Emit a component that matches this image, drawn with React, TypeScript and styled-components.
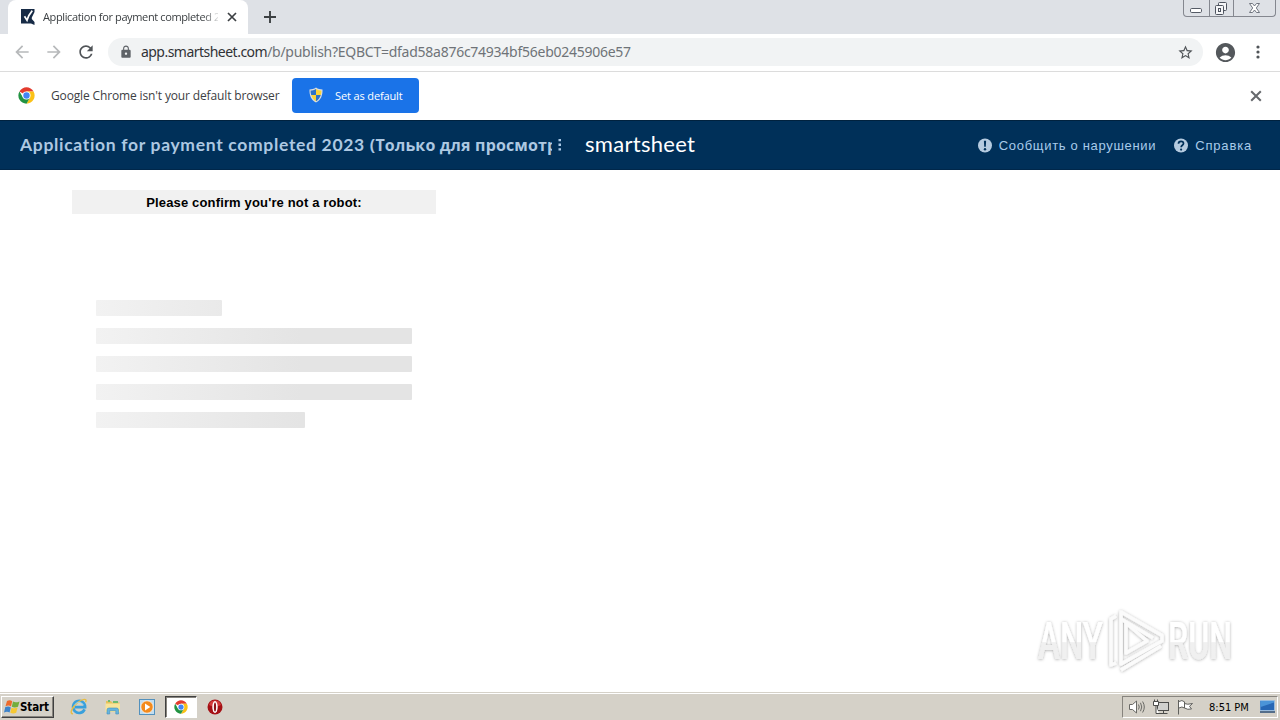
import styled, { createGlobalStyle } from "styled-components";
import { MdLock, MdStarBorder, MdAccountCircle, MdRefresh, MdArrowBack, MdArrowForward } from "react-icons/md";

const GlobalStyle = createGlobalStyle`
  * {
    box-sizing: border-box;
  }

  body {
    margin: 0;
    overflow: hidden;
    background: #fff;
    font-family: "Open Sans", "Noto Sans", sans-serif;
  }

  svg {
    display: block;
    flex-shrink: 0;
  }
`;

const Screen = styled.div`
  display: flex;
  flex-direction: column;
  width: 1280px;
  height: 720px;
  overflow: hidden;
`;

/* letter-spacing varies with each label */
const Label = styled.span<{ $size: number; $color?: string; $spacing?: number; $bold?: boolean }>`
  font-size: ${(p) => p.$size}px;
  color: ${(p) => p.$color ?? "#3c4043"};
  letter-spacing: ${(p) => p.$spacing ?? 0}px;
  font-weight: ${(p) => (p.$bold ? 700 : 400)};
  white-space: pre;
`;

const TabStrip = styled.div`
  display: flex;
  height: 34px;
  padding-left: 8px;
  background: #dee1e6;
`;

const Tab = styled.div`
  display: flex;
  align-items: center;
  width: 240px;
  height: 34px;
  padding-left: 13px;
  background: #fff;
  border-radius: 8px 8px 0 0;
`;

const TabTitle = styled.div`
  display: flex;
  width: 175px;
  margin: 0 9px 0 8px;
  padding-bottom: 1px;
  overflow: hidden;
  mask-image: linear-gradient(to right, #000 160px, transparent 178px);
`;

const NewTab = styled.div`
  padding: 11px 0 0 16px;
`;

const WindowControls = styled.div`
  display: flex;
  width: 93px;
  height: 17px;
  margin: 0 4px 0 auto;
  border: 1px solid #84878f;
  border-top: 0;
  border-radius: 0 0 4px 4px;
`;

const WindowButton = styled.div<{ $width: number }>`
  display: flex;
  justify-content: center;
  width: ${(p) => p.$width}px;
  border-left: 1px solid #84878f;

  &:first-child {
    border-left: 0;
  }
`;

const Toolbar = styled.div`
  display: flex;
  align-items: center;
  height: 38px;
  padding: 0 11px 1px 12px;
  border-bottom: 1px solid #dcdcdc;
`;

const NavButtons = styled.div`
  display: flex;
  gap: 12px;
  width: 96px;
`;

const AddressBar = styled.div`
  display: flex;
  align-items: center;
  width: 1096px;
  height: 28px;
  padding: 0 9px 0 11px;
  background: #f1f3f4;
  border-radius: 14px;
`;

const Url = styled.div`
  display: flex;
  flex: 1;
  margin-left: 8px;
  padding-bottom: 1px;
  font-family: "Noto Sans", sans-serif;
`;

const ToolbarActions = styled.div`
  display: flex;
  align-items: center;
  gap: 10px;
  margin-left: 11px;
`;

const InfoBar = styled.div`
  display: flex;
  align-items: center;
  height: 48px;
  padding: 0 18px 1px;
`;

const InfoText = styled.div`
  display: flex;
  width: 241px;
  margin-left: 16px;
  padding-bottom: 1px;
`;

const DefaultButton = styled.div`
  display: flex;
  align-items: center;
  width: 127px;
  height: 35px;
  margin-right: auto;
  padding: 0 0 1px 16px;
  gap: 11px;
  background: #1a73e8;
  border-radius: 4px;
`;

const SheetHeader = styled.header`
  display: flex;
  align-items: center;
  height: 50px;
  padding: 0 28px 0 20px;
  background: #003059;
  border-top: 1px solid #00223f;
  border-bottom: 1px solid #00274a;
`;

const SheetTitle = styled.div`
  display: flex;
  align-items: baseline;
  width: 532px;
  overflow: hidden;
`;

const SheetName = styled.div`
  font-family: Lato, sans-serif;
`;

const BrandName = styled.div`
  margin: -3px auto 0 21px;
  color: #fff;
  font-family: Lato, sans-serif;
  font-size: 22px;
  line-height: 26px;
  letter-spacing: 0.3px;
`;

const HeaderLink = styled.div`
  display: flex;
  align-items: center;
  gap: 6px;
  margin-left: 18px;
  font-family: "Liberation Sans", Arial, sans-serif;
`;

const Content = styled.main`
  flex: 1;
  padding: 20px 72px;
`;

const RobotCard = styled.section`
  width: 364px;
`;

const RobotTitle = styled.div`
  display: flex;
  align-items: center;
  justify-content: center;
  height: 24px;
  background: #f1f1f1;
  font-family: "Liberation Sans", Arial, sans-serif;
`;

const Skeleton = styled.div`
  display: flex;
  flex-direction: column;
  gap: 12px;
  padding: 86px 24px 0;
`;

const SkeletonLine = styled.div<{ $width: number }>`
  width: ${(p) => p.$width}px;
  height: 16px;
  border-radius: 1px;
  background: linear-gradient(to right, #f2f2f2, #e4e4e4 205px);
`;

const Watermark = styled.div`
  position: absolute;
  left: 1030px;
  top: 603px;
`;

const Taskbar = styled.footer`
  display: flex;
  align-items: center;
  height: 28px;
  background: #d5d1c8;
  border-top: 1px solid #d5d1c8;
  box-shadow: inset 0 1px 0 #fff;
`;

const StartButton = styled.div`
  display: flex;
  align-items: center;
  width: 53px;
  height: 22px;
  margin-left: 1px;
  padding-left: 2px;
  border: 1px solid;
  border-color: #fff #404040 #404040 #fff;
  box-shadow: inset -1px -1px 0 #87847e;
  font-family: "DejaVu Sans Condensed", "DejaVu Sans", sans-serif;
`;

const QuickLaunch = styled.div`
  display: flex;
  align-items: center;
  margin-left: 8px;
`;

const LaunchItem = styled.div<{ $active?: boolean }>`
  display: flex;
  align-items: center;
  justify-content: center;
  width: ${(p) => (p.$active ? 32 : 34)}px;
  height: 22px;
  margin: 0 ${(p) => (p.$active ? 1 : 0)}px;
  border: ${(p) => (p.$active ? "1px solid" : "0")};
  border-color: #404040 #fff #fff #404040;
  background: ${(p) => (p.$active ? "#fff" : "transparent")};
  box-shadow: ${(p) => (p.$active ? "inset 1px 1px 0 #87847e" : "none")};
`;

const Tray = styled.div`
  display: flex;
  align-items: center;
  width: 156px;
  height: 22px;
  margin: 0 2px 0 auto;
  padding-left: 5px;
  border: 1px solid;
  border-color: #87847e #fff #fff #87847e;
  font-family: "DejaVu Sans Condensed", "DejaVu Sans", sans-serif;
`;

const TrayIcons = styled.div`
  display: flex;
  gap: 7px;
  width: 81px;
`;

const Clock = styled.div`
  width: 51px;
  line-height: 14px;
`;

function CheckFavicon() {
  return (
    <svg width="14" height="16" viewBox="0 0 14 16">
      <path d="M0 0H13.5V3L10.8 8.5V10L13.5 13V16L10 14.6H0Z" fill="#172b46" />
      <path d="M3.5 7.2 6 11.2C7 8 8.5 4.8 11.3 1.6" fill="none" stroke="#fff" strokeWidth="1.7" />
    </svg>
  );
}

function Cross({ size, color, width = 1.7 }: { size: number; color: string; width?: number }) {
  return (
    <svg width={size} height={size} viewBox="0 0 10 10">
      <path d="M1 1 9 9M9 1 1 9" stroke={color} strokeWidth={width} />
    </svg>
  );
}

function ChromeLogo({ size }: { size: number }) {
  return (
    <svg width={size} height={size} viewBox="0 0 48 48">
      <circle cx="24" cy="24" r="23" fill="#fff" />
      <path d="M24 24 4.1 12.5A23 23 0 0 1 43.9 12.5H24Z" fill="#e33b2e" />
      <path d="M24 12.5H43.9A23 23 0 0 1 24 47L34 29.8Z" fill="#fbc116" />
      <path d="M4.1 12.5A23 23 0 0 0 24 47L34 29.8 14 29.8Z" fill="#229342" />
      <circle cx="24" cy="24" r="11.5" fill="#fff" />
      <circle cx="24" cy="24" r="9" fill="#4285f4" />
    </svg>
  );
}

function Shield() {
  return (
    <svg width="16" height="16" viewBox="0 0 16 16">
      <path d="M8 .5C10 2 12.3 2.4 14.5 2.5C14.8 8 13 13 8 15.5C3 13 1.2 8 1.5 2.5C3.7 2.4 6 2 8 .5Z" fill="#d9dde0" />
      <path d="M8 2C6 3.2 4.3 3.5 2.6 3.6C2.5 5.2 2.7 6.8 3.2 8.1H8Z" fill="#2c72c7" />
      <path d="M8 2C10 3.2 11.7 3.5 13.4 3.6C13.5 5.2 13.3 6.8 12.8 8.1H8Z" fill="#fbd335" />
      <path d="M8 8.1H3.2C4 10.7 5.4 12.8 8 14.3Z" fill="#fbd335" />
      <path d="M8 8.1H12.8C12 10.7 10.6 12.8 8 14.3Z" fill="#2c72c7" />
    </svg>
  );
}

function NoticeIcon() {
  return (
    <svg width="15" height="15" viewBox="0 0 15 15">
      <circle cx="7" cy="7.5" r="7" fill="#b5cbe0" />
      <path d="M5.9 2.8H8.1L7.8 8.7H6.2Z" fill="#003059" />
      <circle cx="7" cy="11.2" r="1.2" fill="#003059" />
    </svg>
  );
}

function HelpIcon() {
  return (
    <svg width="15" height="15" viewBox="0 0 15 15">
      <circle cx="7" cy="7.5" r="7" fill="#b5cbe0" />
      <path d="M4.5 5.8C4.5 2.5 9.5 2.8 9.5 5.5C9.5 7.3 7.1 7.2 7.1 9.2" fill="none" stroke="#003059" strokeWidth="1.7" />
      <circle cx="7.1" cy="11.6" r="1.1" fill="#003059" />
    </svg>
  );
}

function MinimizeGlyph() {
  return (
    <svg width="13" height="15" viewBox="0 0 13 15">
      <rect x=".5" y="8.5" width="11" height="4" rx="1.2" fill="#fff" stroke="#555b66" />
    </svg>
  );
}

function RestoreGlyph() {
  return (
    <svg width="16" height="16" viewBox="0 0 16 16" fill="#f5f6f8" stroke="#4e545f">
      <rect x="4.5" y="2.5" width="8" height="8" rx="1" />
      <rect x="1.5" y="5.5" width="8" height="9" rx="1" />
      <rect x="4.5" y="8.5" width="2" height="3" />
    </svg>
  );
}

function CloseGlyph() {
  return (
    <svg width="13" height="15" viewBox="0 0 13 15">
      <path
        d="M1.5 3.5H4.5L6.5 6 8.5 3.5H11.5L8.3 8 11.5 12.5H8.5L6.5 10 4.5 12.5H1.5L4.7 8Z"
        fill="#fff"
        stroke="#626873"
        strokeWidth=".9"
      />
    </svg>
  );
}

function WindowsLogo() {
  return (
    <svg width="16" height="16" viewBox="0 0 16 16">
      <path d="M3 2Q6 .3 8.2 2.2L7 7.4Q4.8 5.8 1.5 7.2Z" fill="#ee6a2b" />
      <path d="M9 2.5Q11.5 4.2 15.5 2.4L14 7.7Q10.8 9.2 7.8 7.7Z" fill="#73ad3c" />
      <path d="M1.3 8.1Q4.6 6.8 6.8 8.4L5.6 13.5Q3.3 12 0 13.4Z" fill="#3e83ca" />
      <path d="M7.5 8.7Q10.4 10 13.6 8.6L12.2 13.7Q9.3 15.3 6.3 13.7Z" fill="#f6c833" />
    </svg>
  );
}

function ExplorerIcon() {
  return (
    <svg width="18" height="18" viewBox="0 0 18 18">
      <path d="M14.6 11.4A6 6 0 1 1 15.1 9.2H5" fill="none" stroke="#39a0dc" strokeWidth="2.7" />
      <path d="M3 15.8C-1 16 2 9 8 4.2C12 1 17.8-.2 15.6 4.2" fill="none" stroke="#e8bd45" strokeWidth="1.4" />
      <path d="M4.5 7.2A5 5 0 0 1 13.5 7" fill="none" stroke="#96d5f3" strokeWidth=".9" />
    </svg>
  );
}

function FolderIcon() {
  return (
    <svg width="18" height="18" viewBox="0 0 18 18">
      <path d="M2 3H7L8.2 4.5H15.5V14H2Z" fill="#e5c25c" />
      <path d="M4 2H6V4H4ZM9 3H14V5H9Z" fill="#6fba70" />
      <path d="M1.5 5.5H16V14H1.5Z" fill="#f8e49a" />
      <path d="M3 16V12Q3 10 5 10H12.5Q14.5 10 14.5 12V16H11.8V12.7H5.7V16Z" fill="#66b4df" stroke="#4290bd" strokeWidth=".6" />
    </svg>
  );
}

function PlayerIcon() {
  return (
    <svg width="16" height="16" viewBox="0 0 16 16">
      <rect x=".5" y=".5" width="15" height="15" fill="#c1ddf0" stroke="#5391bd" />
      <circle cx="8" cy="8" r="6.2" fill="#f38a1c" stroke="#fff" strokeWidth=".7" />
      <path d="M6 4.5 11.3 8 6 11.5Z" fill="#fff" />
    </svg>
  );
}

function OperaIcon() {
  return (
    <svg width="16" height="16" viewBox="0 0 16 16">
      <circle cx="8" cy="8" r="7.5" fill="#a51015" />
      <path d="M2 6A6.3 6.3 0 0 1 14 6Q8 9 2 6Z" fill="#d43c3c" />
      <ellipse cx="8" cy="8" rx="2.7" ry="6" fill="#fff" />
      <ellipse cx="8" cy="8" rx="1.1" ry="4.6" fill="#8c1317" />
    </svg>
  );
}

function SpeakerIcon() {
  return (
    <svg width="18" height="16" viewBox="0 0 18 16" fill="none" stroke="#696965">
      <path d="M1.5 5.5H4.5L8.5 2V14L4.5 10.5H1.5Z" fill="#fff" />
      <path d="M10.5 5.5Q12 8 10.5 10.5M12.5 3.8Q15 8 12.5 12.2M14.6 2.5Q18 8 14.6 13.5" />
    </svg>
  );
}

function NetworkIcon() {
  return (
    <svg width="17" height="16" viewBox="0 0 17 16" fill="#fff" stroke="#4c4c4a">
      <rect x="4.5" y="3.5" width="11" height="8" fill="#d1d1ce" />
      <path d="M6 14.5H14.5M10.5 11.5V14.5" />
      <path d="M.5 2.5H5.5V6.5H.5ZM3 6.5V14.5H6M1.5 .5V2.5M4.5 .5V2.5" />
    </svg>
  );
}

function FlagIcon() {
  return (
    <svg width="17" height="16" viewBox="0 0 17 16">
      <path d="M1.5 1V15.5M2 2.5Q5 .5 7.5 2.8V9Q5 7 2 9M7.5 4.5Q10 6 15.5 4.5L12.5 7.3 14.5 10Q10.5 11 7.5 9" fill="#fff" stroke="#60605d" />
    </svg>
  );
}

function DesktopIcon() {
  return (
    <svg width="17" height="15" viewBox="0 0 17 15">
      <path d="M0 1.5H14.5V11.5H0Z" fill="#2767b5" stroke="#a5c8e9" strokeWidth=".7" />
      <path d="M.5 8 14 3.5V2H.5Z" fill="#4b94d8" />
      <path d="M0 13H15" stroke="#294c76" strokeWidth="1.5" />
    </svg>
  );
}

function AnyRunMark() {
  return (
    <svg width="210" height="76" viewBox="0 0 210 76">
      <defs>
        <filter id="soft" x="-10%" y="-10%" width="120%" height="120%">
          <feDropShadow dx="0" dy="0.5" stdDeviation="1.8" floodColor="#000" floodOpacity=".34" />
        </filter>
        <linearGradient id="shade" x1="0" y1="0" x2="0" y2="1">
          <stop offset=".5" stopColor="#fff" />
          <stop offset=".52" stopColor="#f0f0f0" />
        </linearGradient>
      </defs>
      <g filter="url(#soft)">
        <g fill="url(#shade)" fontFamily="Roboto, sans-serif" fontSize="51" fontWeight="500">
          <text x="8" y="56" textLength="65" lengthAdjust="spacingAndGlyphs">ANY</text>
          <text x="138" y="56" textLength="64" lengthAdjust="spacingAndGlyphs">RUN</text>
        </g>
        <g fill="none" stroke="#fbfbfb" strokeWidth="3.5" strokeLinejoin="round">
          <path d="M91 9 132 32.5V38L91 61Z" />
          <path d="M86 13 81 16V62L86 60M96 20V50L117 38Z" />
          <path d="M91 67 131 43M91 16 123 35" />
        </g>
      </g>
    </svg>
  );
}

export default function App() {
  return (
    <Screen>
      <GlobalStyle />

      <TabStrip>
        <Tab>
          <CheckFavicon />
          <TabTitle>
            <Label $size={11} $spacing={-0.37}>Application for payment completed 2</Label>
          </TabTitle>
          <Cross size={10} color="#3c4043" width={1.7} />
        </Tab>
        <NewTab>
          <svg width="12" height="12" viewBox="0 0 12 12">
            <path d="M6 0V12M0 6H12" stroke="#3c4043" strokeWidth="1.9" />
          </svg>
        </NewTab>
        <WindowControls>
          <WindowButton $width={25}><MinimizeGlyph /></WindowButton>
          <WindowButton $width={25}><RestoreGlyph /></WindowButton>
          <WindowButton $width={42}><CloseGlyph /></WindowButton>
        </WindowControls>
      </TabStrip>

      <Toolbar>
        <NavButtons>
          <MdArrowBack size={20} color="#b7b9bb" />
          <MdArrowForward size={20} color="#b7b9bb" />
          <MdRefresh size={20} color="#505458" />
        </NavButtons>
        <AddressBar>
          <MdLock size={14} color="#5f6368" />
          <Url>
            <Label $size={14} $color="#303236" $spacing={-0.52}>app.smartsheet.com</Label>
            <Label $size={14} $color="#6f7378" $spacing={-0.26}>/b/publish?EQBCT=dfad58a876c74934bf56eb0245906e57</Label>
          </Url>
          <MdStarBorder size={17} color="#505458" />
        </AddressBar>
        <ToolbarActions>
          <MdAccountCircle size={23} color="#54585c" />
          <svg width="22" height="16" viewBox="0 0 22 16" fill="#505458">
            <circle cx="11" cy="3" r="1.6" />
            <circle cx="11" cy="8" r="1.6" />
            <circle cx="11" cy="13" r="1.6" />
          </svg>
        </ToolbarActions>
      </Toolbar>

      <InfoBar>
        <ChromeLogo size={17} />
        <InfoText>
          <Label $size={12} $spacing={-0.14}>Google Chrome isn't your default browser</Label>
        </InfoText>
        <DefaultButton>
          <Shield />
          <Label $size={11} $color="#fff" $spacing={-0.13}>Set as default</Label>
        </DefaultButton>
        <Cross size={12} color="#66696d" width={1.7} />
      </InfoBar>

      <SheetHeader>
        <SheetTitle>
          <SheetName>
            <Label $size={17.5} $color="#adc8e2" $spacing={0.68} $bold>{"Application for payment completed 2023 "}</Label>
          </SheetName>
          <Label $size={16} $color="#adc8e2" $spacing={0.16} $bold>(Только для просмотр</Label>
        </SheetTitle>
        <svg width="12" height="14" viewBox="0 0 12 14" fill="#abc9e7">
          <path d="M6.5 1H9V3.3H6.5ZM6.5 5.6H9V7.9H6.5ZM6.5 10.2H9V12.5H6.5Z" />
        </svg>
        <BrandName>smartsheet</BrandName>
        <HeaderLink>
          <NoticeIcon />
          <Label $size={13} $color="#a8cbea" $spacing={0.68}>Сообщить о нарушении</Label>
        </HeaderLink>
        <HeaderLink>
          <HelpIcon />
          <Label $size={13} $color="#a8cbea" $spacing={0.83}>Справка</Label>
        </HeaderLink>
      </SheetHeader>

      <Content>
        <RobotCard>
          <RobotTitle>
            <Label $size={13} $color="#000" $spacing={0.15} $bold>Please confirm you're not a robot:</Label>
          </RobotTitle>
          <Skeleton>
            <SkeletonLine $width={126} />
            <SkeletonLine $width={316} />
            <SkeletonLine $width={316} />
            <SkeletonLine $width={316} />
            <SkeletonLine $width={209} />
          </Skeleton>
        </RobotCard>
        <Watermark>
          <AnyRunMark />
        </Watermark>
      </Content>

      <Taskbar>
        <StartButton>
          <WindowsLogo />
          <Label $size={11.5} $color="#000" $spacing={-0.1} $bold>Start</Label>
        </StartButton>
        <QuickLaunch>
          <LaunchItem><ExplorerIcon /></LaunchItem>
          <LaunchItem><FolderIcon /></LaunchItem>
          <LaunchItem><PlayerIcon /></LaunchItem>
          <LaunchItem $active><ChromeLogo size={14} /></LaunchItem>
          <LaunchItem><OperaIcon /></LaunchItem>
        </QuickLaunch>
        <Tray>
          <TrayIcons>
            <SpeakerIcon />
            <NetworkIcon />
            <FlagIcon />
          </TrayIcons>
          <Clock>
            <Label $size={11} $color="#000">8:51 PM</Label>
          </Clock>
          <DesktopIcon />
        </Tray>
      </Taskbar>
    </Screen>
  );
}
